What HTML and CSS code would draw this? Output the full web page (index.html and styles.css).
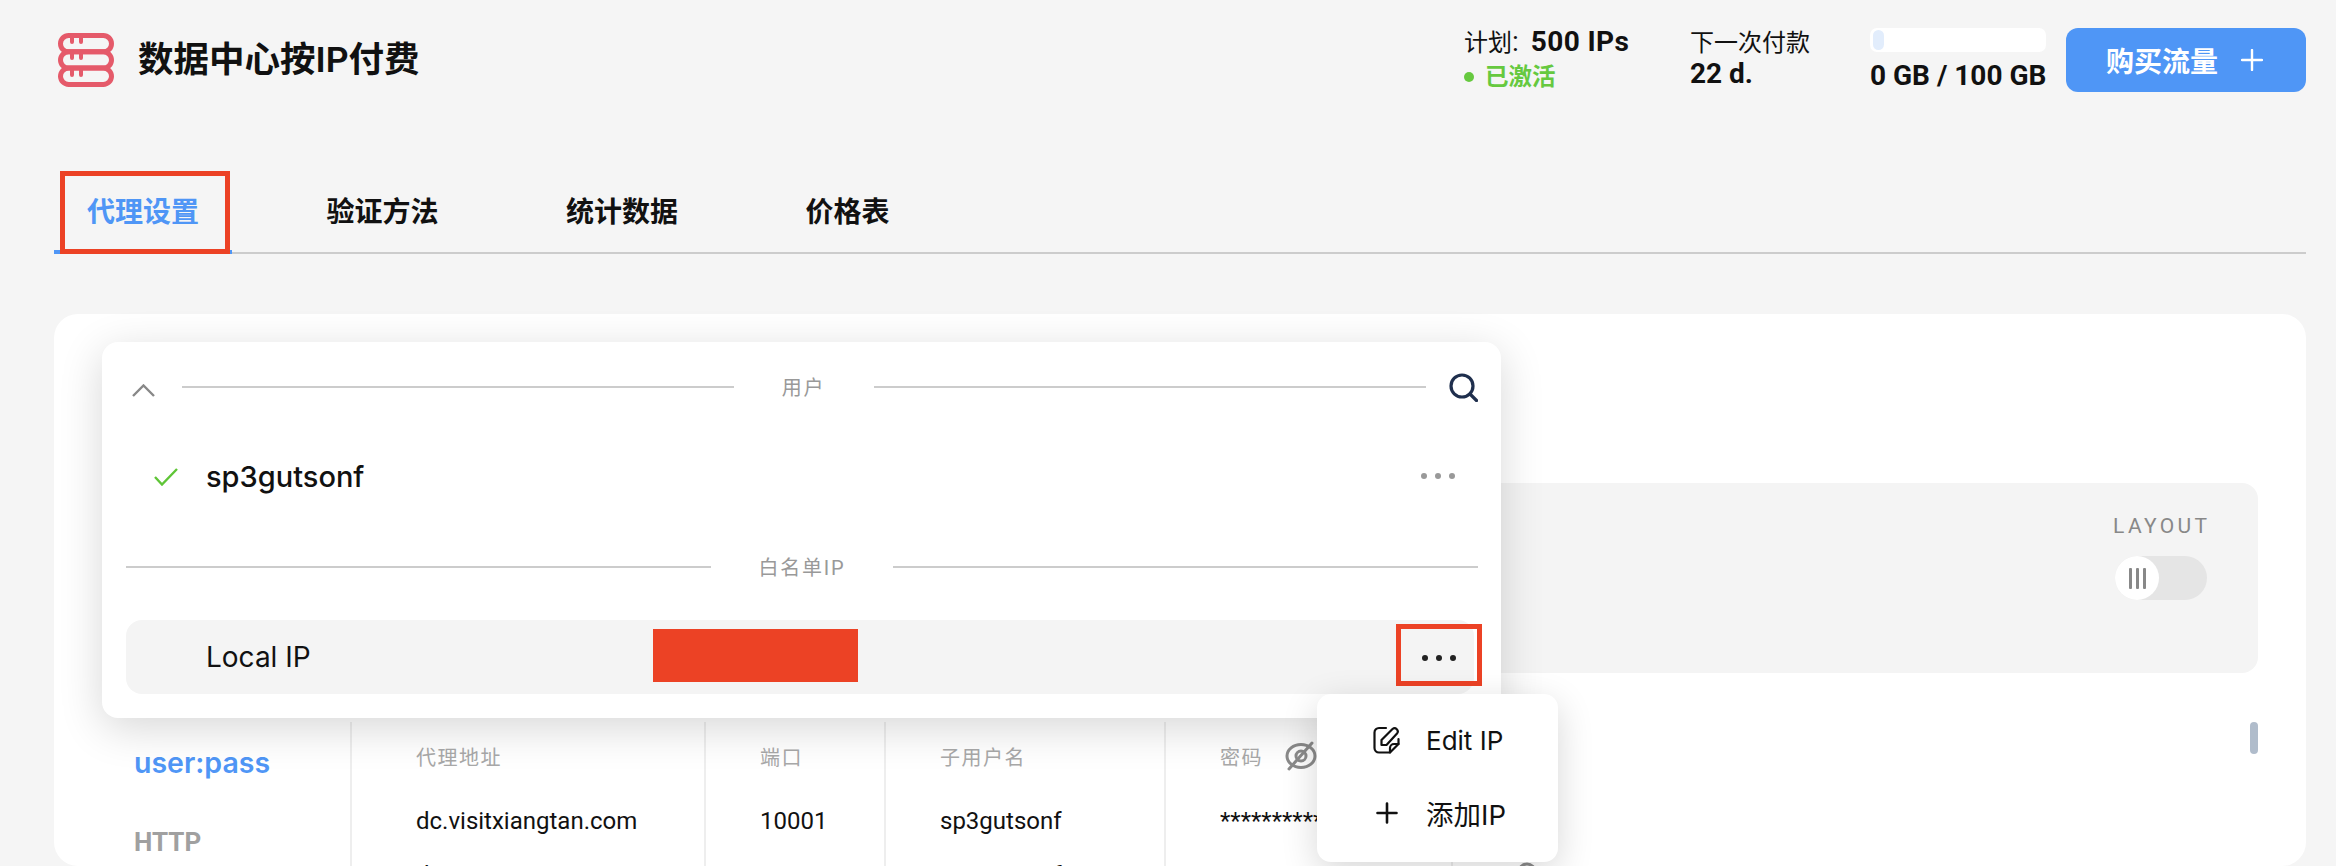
FILE: index.html
```html
<!DOCTYPE html>
<html lang="zh">
<head>
<meta charset="utf-8">
<title>数据中心按IP付费</title>
<link rel="stylesheet" href="styles.css">
</head>
<body>
<div class="page">
  <header class="top">
    <div class="brand">
      <svg class="brand-icon" viewBox="0 0 56 54" fill="none" stroke="#e55a6a" stroke-width="5" stroke-linecap="round">
        <rect x="2.5" y="2.5" width="51" height="16.3" rx="8.15"/>
        <rect x="2.5" y="18.8" width="51" height="16.3" rx="8.15"/>
        <rect x="2.5" y="35.1" width="51" height="16.4" rx="8.2"/>
        <path d="M14 3v6M23 3v6M14 19v6M23 19v6M14 36v6M23 36v6" stroke-width="4"/>
      </svg>
      <h1 class="title">数据中心按IP付费</h1>
    </div>
    <div class="summary">
      <div class="plan">
        <div class="plan-line"><span class="plan-key">计划</span>: <b>500 IPs</b></div>
        <div class="plan-status"><span class="dot"></span>已激活</div>
      </div>
      <div class="next">
        <div class="next-label">下一次付款</div>
        <div class="next-value">22 d.</div>
      </div>
      <div class="usage">
        <div class="meter"><span class="meter-fill"></span></div>
        <div class="usage-text">0 GB / 100 GB</div>
      </div>
      <button class="buy">购买流量
        <svg class="buy-plus" viewBox="0 0 22 22" fill="none" stroke="#fff" stroke-width="2.4" stroke-linecap="round"><path d="M11 1v20M1 11h20"/></svg>
      </button>
    </div>
  </header>

  <nav class="tabs">
    <a class="tab active">代理设置<span class="mark-tab"></span></a>
    <a class="tab">验证方法</a>
    <a class="tab">统计数据</a>
    <a class="tab">价格表</a>
  </nav>

  <main class="card">
    <section class="panel">
      <div class="layout-group">
        <div class="layout-label">LAYOUT</div>
        <div class="toggle">
          <span class="knob"><i></i><i></i><i></i></span>
        </div>
      </div>
    </section>

    <section class="table">
      <div class="proto">
        <div class="proto-item on">user:pass</div>
        <div class="proto-item">HTTP</div>
      </div>
      <div class="col col-addr">
        <div class="head">代理地址</div>
        <div class="val">dc.visitxiangtan.com</div>
        <div class="val">dc.visitxiangtan.com</div>
      </div>
      <div class="col">
        <div class="head">端口</div>
        <div class="val">10001</div>
        <div class="val">10002</div>
      </div>
      <div class="col">
        <div class="head">子用户名</div>
        <div class="val">sp3gutsonf</div>
        <div class="val">sp3gutsonf</div>
      </div>
      <div class="col">
        <div class="head">密码
          <svg class="eye" viewBox="0 0 32 30" fill="none" stroke="#8c8c8c" stroke-width="3" stroke-linecap="round">
            <ellipse cx="16" cy="15" rx="14" ry="11.5"/>
            <circle cx="16" cy="15" r="5"/>
            <path d="M27 2 4 28"/>
          </svg>
        </div>
        <div class="val">************</div>
        <div class="val">************</div>
      </div>
      <div class="col col-last">
        <div class="spacer"></div>
        <svg class="copy" viewBox="0 0 20 20" fill="none" stroke="#8c8c8c" stroke-width="3"><circle cx="10" cy="10" r="8"/></svg>
      </div>
      <span class="thumb"></span>
    </section>
  </main>

  <aside class="popup">
    <div class="divider top-divider">
      <svg class="chev" viewBox="0 0 23 13" fill="none" stroke="#888" stroke-width="2.4"><path d="M1 12 11.500 1.500 22 12"/></svg>
      <span class="rule"></span>
      <span class="divider-label">用户</span>
      <span class="rule"></span>
      <svg class="search" viewBox="0 0 29 29" fill="none" stroke="#1f2f4d" stroke-width="3.200" stroke-linecap="round"><circle cx="13" cy="13" r="11"/><path d="M21 21l6.500 6.500"/></svg>
    </div>
    <div class="user-row">
      <svg class="check" viewBox="0 0 24 18" fill="none" stroke="#5fc537" stroke-width="2.400"><path d="M1 9l7 7.500L23 1"/></svg>
      <span class="user-name">sp3gutsonf</span>
      <span class="dots grey"><i></i><i></i><i></i></span>
    </div>
    <div class="divider ip-divider">
      <span class="rule"></span>
      <span class="divider-label">白名单IP</span>
      <span class="rule"></span>
    </div>
    <div class="ip-row">
      <span class="ip-name">Local IP</span>
      <span class="redact"></span>
      <span class="dots"><i></i><i></i><i></i></span>
      <span class="mark-dots"></span>
    </div>
  </aside>

  <aside class="menu">
    <div class="menu-item">
      <span class="menu-icon">
        <svg class="edit-icon" viewBox="0 0 27 28" fill="none" stroke="#111" stroke-width="2.200" stroke-linejoin="round" stroke-linecap="round">
          <path d="M13 2H6a4.500 4.500 0 0 0-4.500 4.500V22A4.500 4.500 0 0 0 6 26.500h11L25.500 18v-5"/>
          <path d="M25.500 18H21a4 4 0 0 0-4 4v4.500"/>
          <path d="M8.500 19v-5L19.500 3a3.200 3.200 0 0 1 4.500 4.500L13.500 19z"/>
        </svg>
      </span>
      <span>Edit IP</span>
    </div>
    <div class="menu-item add">
      <span class="menu-icon">
        <svg class="plus-icon" viewBox="0 0 22 22" fill="none" stroke="#111" stroke-width="2.600" stroke-linecap="round"><path d="M11 1.500v19M1.500 11h19"/></svg>
      </span>
      <span>添加IP</span>
    </div>
  </aside>
</div>
</body>
</html>
```
FILE: styles.css
```css
* { box-sizing: border-box; }
html, body { margin: 0; height: 866px; overflow: hidden; background: #f5f5f5; }
body { font-family: Roboto, "Noto Sans CJK SC", sans-serif; color: #111; }
.page { position: relative; width: 2336px; height: 866px; overflow: hidden; }

.top { display: flex; justify-content: space-between; align-items: flex-start; height: 171px; padding: 28px 30px 0 58px; }
.brand { display: flex; align-items: center; gap: 24px; margin-top: 4px; }
.brand-icon { width: 56px; height: 54px; display: block; }
.title { margin: 1px 0 0; font-size: 35.500px; line-height: 54px; font-weight: 600; font-family: Roboto, "Noto Sans CJK SC", sans-serif; }

.summary { display: flex; align-items: flex-start; }
.plan { width: 226px; font-size: 24px; line-height: 30px; }
.plan-line { margin-top: -1px; font-size: 28px; white-space: nowrap; }
.plan-key { font-size: 24px; }
.plan-line b { font-weight: 700; margin-left: 5px; letter-spacing: .4px; }
.plan-status { display: flex; align-items: center; margin-top: 4px; color: #66c93f; font-weight: 700; font-size: 23.500px; }
.dot { width: 10px; height: 10px; border-radius: 50%; background: #66c93f; margin-right: 11px; }
.next { width: 180px; font-size: 24px; line-height: 30px; }
.next-value { font-size: 28px; font-weight: 700; margin-top: 1px; }
.usage { width: 176px; margin-right: 20px; }
.meter { height: 24px; background: #fff; border-radius: 7px; padding: 2px 3px; }
.meter-fill { display: block; width: 11px; height: 20px; border-radius: 6px; background: #e2edfc; }
.usage-text { margin-top: 9px; font-size: 28px; line-height: 30px; font-weight: 700; white-space: nowrap; }
.buy { display: flex; align-items: center; justify-content: flex-start; width: 240px; height: 64px; padding: 0 0 0 40px; border: 0; border-radius: 12px; background: #4f96f6; color: #fff; font: 600 28px Roboto, "Noto Sans CJK SC", sans-serif; }
.buy-plus { width: 22px; height: 22px; margin-left: 23px; }

.tabs { position: relative; display: flex; gap: 61.500px; height: 83px; margin: 0 30px 0 54px; border-bottom: 2px solid #ccc; }
.tab { position: relative; height: 83px; padding: 23px 33px 0; font-size: 28px; line-height: 38px; font-weight: 600; color: #111; }
.tab.active { color: #4f96f6; border-bottom: 4px solid #4f96f6; }
.mark-tab { position: absolute; left: 6px; right: 2px; top: 0; bottom: -4px; border: 5px solid #ec4225; }

.card { height: 552px; margin: 60px 30px 0 54px; padding-top: 169px; background: #fff; border-radius: 24px; position: relative; }
.panel { display: flex; justify-content: flex-end; height: 190px; margin: 0 48px 0 60px; padding: 34px 51px 0 0; background: #f4f4f4; border-radius: 16px; }
.layout-label { font-size: 21px; line-height: 18px; letter-spacing: 3.400px; color: #888; white-space: nowrap; margin-left: -2px; }
.layout-group { width: 92px; }
.toggle { width: 92px; height: 44px; margin-top: 21px; border-radius: 22px; background: #e5e5e5; }
.knob { display: flex; align-items: center; justify-content: center; gap: 4px; width: 44px; height: 44px; border-radius: 50%; background: #fff; }
.knob i { display: block; width: 3px; height: 21px; background: #888; border-radius: 1px; }

.table { position: relative; display: grid; grid-template-columns: 296px 354px 180px 280px 287px 1fr; height: 144px; margin-top: 49px; overflow: hidden; }
.proto { padding: 21px 0 0 80px; }
.proto-item { font-size: 26px; line-height: 40px; font-weight: 700; color: #a0a0a0; margin-bottom: 39px; }
.proto-item.on { font-family: Inter, sans-serif; font-size: 28.500px; font-weight: 600; color: #4f96f6; }
.col { border-left: 2px solid #eee; padding-left: 54px; }
.col-addr { padding-left: 64px; }
.head { display: flex; align-items: center; gap: 22px; height: 30px; margin-top: 19px; font-size: 20px; letter-spacing: 1.500px; color: #a8a8a8; white-space: nowrap; }
.val { height: 54px; font-size: 24px; line-height: 54px; color: #111; white-space: nowrap; }
.head + .val { margin-top: 23px; }
.eye { width: 32px; height: 30px; }
.col-last { padding-left: 64px; }
.spacer { height: 140px; }
.copy { display: block; width: 20px; height: 20px; }
.thumb { position: absolute; right: 48px; top: 0; width: 8px; height: 32px; border-radius: 4px; background: #b0bccb; }

.popup { position: absolute; left: 102px; top: 342px; width: 1399px; height: 376px; padding: 30px 23px 0 24px; background: #fff; border-radius: 16px; box-shadow: 0 10px 44px rgba(0,0,0,.16); }
.divider { display: flex; align-items: center; }
.rule { flex: 1; height: 2px; background: #ccc; }
.divider-label { font-size: 20px; letter-spacing: 1.800px; color: #999; white-space: nowrap; position: relative; top: -1px; }
.top-divider { height: 30px; margin-top: 0; }
.top-divider .divider-label { margin: 0 49px 0 48px; }
.chev { width: 23px; height: 13px; margin: 6px 27px 0 6px; flex: none; }
.search { width: 29px; height: 29px; margin-left: 23px; flex: none; }
.user-row { display: flex; align-items: center; height: 60px; margin-top: 44px; padding-left: 28px; }
.check { width: 24px; height: 18px; margin-right: 28px; margin-top: 2px; }
.user-name { flex: 1; font-family: Inter, sans-serif; font-size: 29px; font-weight: 500; }
.dots { display: flex; gap: 8px; }
.dots i { display: block; width: 6px; height: 6px; border-radius: 50%; background: #222; }
.dots.grey { margin-right: 23px; }
.dots.grey i { background: #999; }
.ip-divider { height: 30px; margin-top: 46px; }
.ip-divider .divider-label { margin: 0 47px; }
.ip-row { position: relative; display: flex; align-items: center; height: 74px; margin: 38px 4px 0 0; padding-left: 80px; background: #f4f4f4; border-radius: 16px; }
.ip-name { width: 447px; font-family: Inter, sans-serif; font-size: 28px; font-weight: 400; }
.redact { width: 205px; height: 53px; margin-top: -3px; background: #ec4225; }
.ip-row .dots { position: absolute; left: 1296px; top: 35px; }
.mark-dots { position: absolute; left: 1270px; top: 4px; width: 86px; height: 62px; border: 5px solid #ec4225; }

.menu { position: absolute; left: 1317px; top: 694px; width: 241px; height: 168px; padding-top: 10px; background: #fff; border-radius: 14px; box-shadow: 0 10px 36px rgba(0,0,0,.16); }
.menu-item { display: flex; align-items: center; height: 72px; font-family: Inter, "Noto Sans CJK SC", sans-serif; font-size: 26px; color: #111; }
.menu-item.add { font-size: 27.500px; margin-top: 1px; }
.menu-icon { display: flex; justify-content: flex-start; width: 109px; padding-left: 56px; }
.edit-icon { width: 27px; height: 28px; flex: none; }
.plus-icon { width: 22px; height: 22px; flex: none; margin-left: 3px; }
```
